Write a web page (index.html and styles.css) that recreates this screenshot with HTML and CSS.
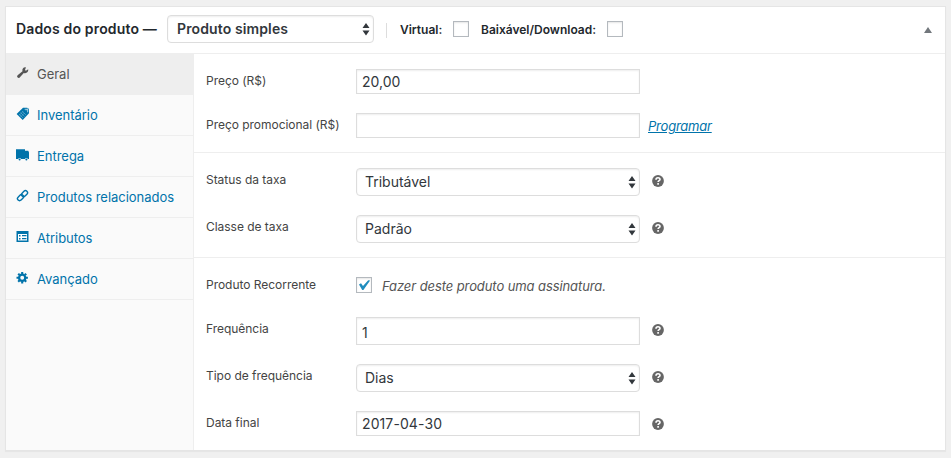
FILE: index.html
```html
<!DOCTYPE html>
<html lang="pt-BR">
<head>
<meta charset="utf-8">
<title>Dados do produto</title>
<link rel="stylesheet" href="styles.css">
</head>
<body>
<svg class="defs" aria-hidden="true">
  <symbol id="arrows" viewBox="0 0 8 13"><path d="M4 0 7.500 5H.5zM4 12.500.5 7.500h7z"/></symbol>
  <symbol id="help" viewBox="0 0 12 12"><circle cx="6" cy="6" r="5.900" fill="#666"/><path d="M4 4.700c0-2.500 4-2.400 4-.3C8 5.800 6.100 5.600 6.100 7.100M6.100 8v1.700" fill="none" stroke="#fff" stroke-width="1.600"/></symbol>
</svg>
<section class="postbox">
  <header class="head">
    <h2 class="title">Dados do produto —</h2>
    <div class="select head-select"><span>Produto simples</span><svg class="arrows"><use href="#arrows"/></svg></div>
    <div class="types">
      <span class="type-virtual">Virtual:</span><span class="check"></span>
      <span class="type-download">Baixável/Download:</span><span class="check"></span>
    </div>
    <svg class="toggle" viewBox="0 0 8 6"><path d="M4 0 8 6H0z"/></svg>
  </header>
  <div class="body">
    <nav class="tabs">
      <a class="tab active"><svg viewBox="0 0 14 14"><path d="M12.200 3.300 9.900 4.700 9 3.900 9.900 1.400C7.500 1 5.800 3 6.500 5.200L1.600 9.300c-1.500 1.500.6 3.600 2.100 2.100L7.800 6.900c2.600 1 4.900-1 4.400-3.600z"/></svg><span>Geral</span></a>
      <a class="tab"><svg viewBox="0 0 14 14"><path d="M.6 7 7 .8h4l1.800.6.2 4.800L6.700 13z"/><path d="M8.700 2.300h2.900v3M12.700.9l-2.500 2.500" fill="none" stroke="#c5e0ec" stroke-width=".8"/><path d="M3 7l4 4M4.500 5.500l4 4M6 4l4 4M7 4.500l-4 4M8.500 6l-4 4" fill="none" stroke="#7fb9d5" stroke-width=".5"/></svg><span>Inventário</span></a>
      <a class="tab"><svg viewBox="0 0 14 14"><path d="M0 1.300h9v1.500h3.300l.7 1.700v6.500h-1.100a1.600 1.600 0 0 0-3 0H5.100a1.600 1.600 0 0 0-3 0H0z"/><circle cx="3.600" cy="11.400" r="1"/><circle cx="10.400" cy="11.400" r="1"/></svg><span>Entrega</span></a>
      <a class="tab"><svg viewBox="0 0 14 14"><g fill="none" stroke="currentColor" stroke-width="1.400"><rect x="5.100" y="2.600" width="6.800" height="4.200" rx="2.100" transform="rotate(-45 8.500 4.700)"/><rect x="1.100" y="6.600" width="6.800" height="4.200" rx="2.100" transform="rotate(-45 4.500 8.700)"/></g></svg><span>Produtos relacionados</span></a>
      <a class="tab"><svg viewBox="0 0 14 14"><path d="M.5 1h12v11H.5z"/><path d="M2 4h9v6.500H2z" fill="#fff"/><path d="M3 5h1.500v1.500H3zM3 8h1.500v1.500H3zM6 5h4.500v1.300H6zM6 8h4.500v1.300H6z"/></svg><span>Atributos</span></a>
      <a class="tab"><svg viewBox="0 0 14 14"><circle cx="6.200" cy="6.700" r="3.100" fill="none" stroke="currentColor" stroke-width="2.300"/><path d="M6.200 1v2M6.200 10.400v2M.5 6.700h2M9.900 6.700h2M2.200 2.700l1.400 1.400M8.800 9.300l1.400 1.400M2.200 10.700l1.400-1.400M8.800 4.100l1.400-1.400" stroke="currentColor" stroke-width="2.100"/></svg><span>Avançado</span></a>
    </nav>
    <div class="panel">
      <div class="group prices">
        <div class="row"><label>Preço (R$)</label><div class="input"><span>20,00</span></div></div>
        <div class="row"><label>Preço promocional (R$)</label><div class="input"></div><a class="schedule">Programar</a></div>
      </div>
      <div class="group taxes">
        <div class="row"><label>Status da taxa</label><div class="select"><span>Tributável</span><svg class="arrows"><use href="#arrows"/></svg></div><svg class="help"><use href="#help"/></svg></div>
        <div class="row"><label>Classe de taxa</label><div class="select"><span>Padrão</span><svg class="arrows"><use href="#arrows"/></svg></div><svg class="help"><use href="#help"/></svg></div>
      </div>
      <div class="group recurring">
        <div class="row check-row"><label>Produto Recorrente</label><span class="check"><svg viewBox="0 0 14 14"><path d="m2 6.500 2-1.200 2 2.800L11.200 2.200l1.900.4-6.700 9.500H5.200z"/></svg></span><em class="desc">Fazer deste produto uma assinatura.</em></div>
        <div class="row"><label>Frequência</label><div class="input tall"><span>1</span></div><svg class="help"><use href="#help"/></svg></div>
        <div class="row"><label>Tipo de frequência</label><div class="select"><span>Dias</span><svg class="arrows"><use href="#arrows"/></svg></div><svg class="help"><use href="#help"/></svg></div>
        <div class="row"><label>Data final</label><div class="input"><span class="date">2017-04-30</span></div><svg class="help"><use href="#help"/></svg></div>
      </div>
    </div>
  </div>
</section>
</body>
</html>
```
FILE: styles.css
```css
* { box-sizing: border-box; }
body { margin: 0; padding: 6px 5px 0; height: 458px; overflow: hidden; background: #f0f0f0; font-family: Inter, "Liberation Sans", sans-serif; color: #32373c; }
.defs { display: none; }
.postbox { height: 445px; border: 1px solid #e5e5e5; background: #fff; box-shadow: 0 1px 1px rgba(0,0,0,.04); }
.head { display: flex; align-items: center; height: 47px; padding: 0 13px 0 10px; border-bottom: 1px solid #eee; color: #23282d; font-weight: 600; font-size: 12px; white-space: nowrap; }
.title { margin: 0; padding-bottom: 3px; width: 151px; font-size: 14px; font-weight: 600; letter-spacing: .16px; }
.select, .input { display: flex; align-items: center; width: 284px; border: 1px solid #ddd; background: #fff; box-shadow: inset 0 1px 2px rgba(0,0,0,.07); font-size: 14px; white-space: nowrap; }
.select { height: 28px; border-radius: 4px; padding: 0 3px 0 8px; justify-content: space-between; }
.select span { padding-bottom: 2px; }
.head-select { width: 207px; margin-top: -2px; padding-left: 9px; color: #32373c; letter-spacing: .12px; }
.head-select span { padding-bottom: 1px; }
.input { height: 25px; padding: 0 5px; }
.input.tall { height: 28px; padding-top: 2px; }
.date { letter-spacing: .1px; }
.arrows { width: 8px; height: 13px; fill: #32373c; }
.types { display: flex; align-items: center; height: 15px; margin-left: 12px; padding-left: 13px; border-left: 1px solid #ddd; }
.type-virtual, .type-download { padding-bottom: 2px; }
.type-virtual { width: 53px; }
.type-download { width: 126px; margin-left: 12px; }
.types .check { margin-top: -2px; }
.check { width: 16px; height: 16px; border: 1px solid #b4b9be; background: #fff; box-shadow: inset 0 1px 2px rgba(0,0,0,.1); }
.check svg { display: block; width: 14px; height: 14px; fill: #1e8cbe; }
.toggle { width: 8px; height: 6px; margin-left: auto; fill: #72777c; }
.body { display: flex; height: 396px; }
.tabs { width: 188px; background: #fafafa; border-right: 1px solid #eee; }
.tab { display: flex; height: 41px; padding: 12px 0 0 10px; border-bottom: 1px solid #eee; color: #0073aa; font-size: 13px; line-height: 16px; letter-spacing: -.02px; white-space: nowrap; }
.tab svg { width: 14px; height: 14px; margin-right: 7px; fill: currentColor; }
.tab.active { background: #eee; color: #555; }
.panel { flex: 1; color: #444; font-size: 12px; }
.group { display: flex; flex-direction: column; padding: 15px 0 0 12px; border-bottom: 1px solid #eee; }
.prices { height: 99px; gap: 19px; }
.taxes { height: 105px; gap: 19px; }
.recurring { gap: 19px; border: 0; }
.row { display: flex; align-items: flex-start; }
.row label { width: 150px; line-height: 24px; letter-spacing: -.03px; white-space: nowrap; }
.row .select, .row .input { color: #32373c; }
.help { width: 12px; height: 12px; margin: 7px 0 0 12px; }
.schedule { margin-left: 8px; color: #0073aa; font-size: 13px; font-style: italic; line-height: 26px; letter-spacing: -.22px; text-decoration: underline; }
.check-row { height: 25px; }
.check-row .check { margin-top: 4px; }
.desc { margin-left: 10px; color: #555; font-size: 13px; line-height: 26px; letter-spacing: -.09px; }
```
